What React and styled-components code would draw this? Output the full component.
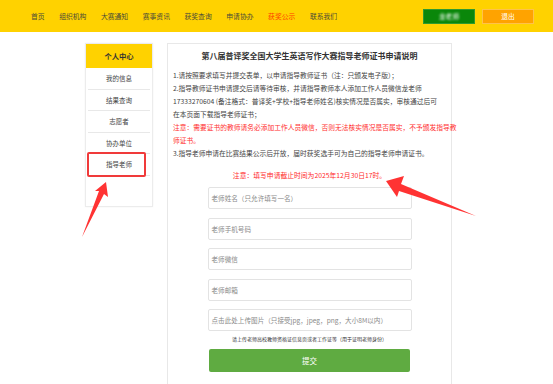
import styled, { createGlobalStyle } from "styled-components";

const GlobalStyle = createGlobalStyle`
  html, body {
    margin: 0;
    padding: 0;
    background: #fff;
    font-family: "Noto Sans CJK SC", "Noto Sans", sans-serif;
  }
`;

const Page = styled.div`
  position: relative;
  width: 553px;
  height: 384px;
  overflow: hidden;
`;

const Header = styled.div`
  height: 32px;
  background: #ffd200;
  display: flex;
  align-items: center;
  padding-left: 31px;
`;

const Nav = styled.div`
  display: flex;
  gap: 14.6px;
`;

const NavItem = styled.span`
  font-size: 6.8px;
  color: ${props => (props.active ? "#ff3d00" : "#4a4a3a")};
  white-space: nowrap;
`;

const UserBox = styled.div`
  margin-left: auto;
  display: flex;
  gap: 7px;
  margin-right: 19px;
`;

const HeadBtn = styled.div`
  width: 52px;
  height: 15px;
  box-sizing: border-box;
  display: flex;
  align-items: center;
  justify-content: center;
  font-size: 6.8px;
  color: #fff;
  background: ${props => props.bg};
  border: 1px solid ${props => props.line};
`;

const Blurred = styled.span`
  filter: blur(1.2px);
`;

const Body = styled.div`
  display: flex;
  align-items: flex-start;
  margin-top: 11px;
  margin-left: 85px;
  gap: 14px;
`;

const Sidebar = styled.div`
  width: 68px;
  height: 164px;
  box-sizing: border-box;
  border: 1px solid #ececec;
  box-shadow: 0 0 2px rgba(0, 0, 0, 0.05);
`;

const SideHead = styled.div`
  height: 24px;
  background: #ffd200;
  display: flex;
  align-items: center;
  justify-content: center;
  font-size: 7.3px;
  font-weight: bold;
  color: #333;
`;

const SideItem = styled.div`
  position: relative;
  height: 21.5px;
  box-sizing: border-box;
  margin: 0 2px;
  border-bottom: 1px solid #e8e8e8;
  display: flex;
  align-items: center;
  justify-content: center;
  font-size: 6.5px;
  color: #444;
`;

const Highlight = styled.div`
  position: absolute;
  left: -1px;
  top: -2px;
  width: 59px;
  height: 25px;
  box-sizing: border-box;
  border: 2px solid #f03a3a;
  border-radius: 2px;
`;

const Panel = styled.div`
  width: 285px;
  height: 341px;
  box-sizing: border-box;
  border: 1px solid #e8e8e8;
  border-bottom: none;
  padding: 6px 5px 0;
  display: flex;
  flex-direction: column;
  align-items: center;
`;

const Title = styled.div`
  font-size: 8px;
  line-height: 12px;
  font-weight: bold;
  color: #333;
  white-space: nowrap;
`;

const Notes = styled.div`
  align-self: stretch;
  margin-top: 6.5px;
  font-size: 6.75px;
  line-height: 13px;
  color: #444;
  white-space: nowrap;
`;

const Red = styled.div`
  color: #ff3030;
`;

const Deadline = styled.div`
  margin-top: 9px;
  font-size: 6.8px;
  line-height: 13px;
  color: #ff2a2a;
  white-space: nowrap;
`;

const Form = styled.div`
  margin-top: 5.5px;
  width: 204px;
  display: flex;
  flex-direction: column;
  gap: 8.5px;
`;

const Field = styled.div`
  height: 22px;
  box-sizing: border-box;
  border: 1px solid #e3e3e3;
  border-radius: 2px;
  display: flex;
  align-items: center;
  padding-left: 3px;
  font-size: 6.6px;
  color: #8a8a8a;
  white-space: nowrap;
`;

const Hint = styled.div`
  margin-top: 4px;
  font-size: 5px;
  line-height: 8px;
  color: #333;
  white-space: nowrap;
`;

const Submit = styled.div`
  margin-top: 6px;
  width: 201px;
  height: 23px;
  border-radius: 2px;
  background: #5fab41;
  color: #fff;
  font-size: 7.5px;
  display: flex;
  align-items: center;
  justify-content: center;
`;

const Arrows = styled.svg`
  position: absolute;
  left: 0;
  top: 0;
  pointer-events: none;
`;

const navItems = ["首页", "组织机构", "大赛通知", "赛事资讯", "获奖查询", "申请协办", "获奖公示", "联系我们"];
const sideItems = ["我的信息", "结果查询", "志愿者", "协办单位", "指导老师"];
const fields = [
  "老师姓名（只允许填写一名）",
  "老师手机号码",
  "老师微信",
  "老师邮箱",
  "点击此处上传图片（只接受jpg，jpeg，png，大小8M以内）",
];

const App = () => {
  return (
    <Page>
      <GlobalStyle />
      <Header>
        <Nav>
          {navItems.map(n => (
            <NavItem key={n} active={n === "获奖公示"}>{n}</NavItem>
          ))}
        </Nav>
        <UserBox>
          <HeadBtn bg="#0a870a" line="#2f9a2f"><Blurred>龙老师</Blurred></HeadBtn>
          <HeadBtn bg="#ffa300" line="#ffc24a">退出</HeadBtn>
        </UserBox>
      </Header>
      <Body>
        <Sidebar>
          <SideHead>个人中心</SideHead>
          {sideItems.map(s => (
            <SideItem key={s}>
              {s}
              {s === "指导老师" && <Highlight />}
            </SideItem>
          ))}
        </Sidebar>
        <Panel>
          <Title>第八届普译奖全国大学生英语写作大赛指导老师证书申请说明</Title>
          <Notes>
            <div>1.请按照要求填写并提交表单，以申请指导教师证书（注：只颁发电子版）；</div>
            <div>2.指导教师证书申请提交后请等待审核，并请指导教师本人添加工作人员微信龙老师</div>
            <div>17333270604 (备注格式：普译奖+学校+指导老师姓名)核实情况是否属实，审核通过后可</div>
            <div>在本页面下载指导老师证书；</div>
            <Red>注意：需要证书的教师请务必添加工作人员微信，否则无法核实情况是否属实，不予颁发指导教</Red>
            <Red>师证书。</Red>
            <div>3.指导老师申请在比赛结果公示后开放，届时获奖选手可为自己的指导老师申请证书。</div>
          </Notes>
          <Deadline>注意：填写申请截止时间为2025年12月30日17时。</Deadline>
          <Form>
            {fields.map(f => (
              <Field key={f}>{f}</Field>
            ))}
          </Form>
          <Hint>请上传老师高校教师资格证信息页或者工作证等（用于证明老师身份）</Hint>
          <Submit>提交</Submit>
        </Panel>
      </Body>
      <Arrows width="553" height="384" viewBox="0 0 553 384">
        <polygon
          points="386,181 404,176 401,184 476,216 399,191 397,197"
          fill="#ff3333"
        />
        <polygon
          points="106,182 108,197 104,194 82,237 99,191 95,191"
          fill="#ff3333"
        />
      </Arrows>
    </Page>
  );
};

export default App;
